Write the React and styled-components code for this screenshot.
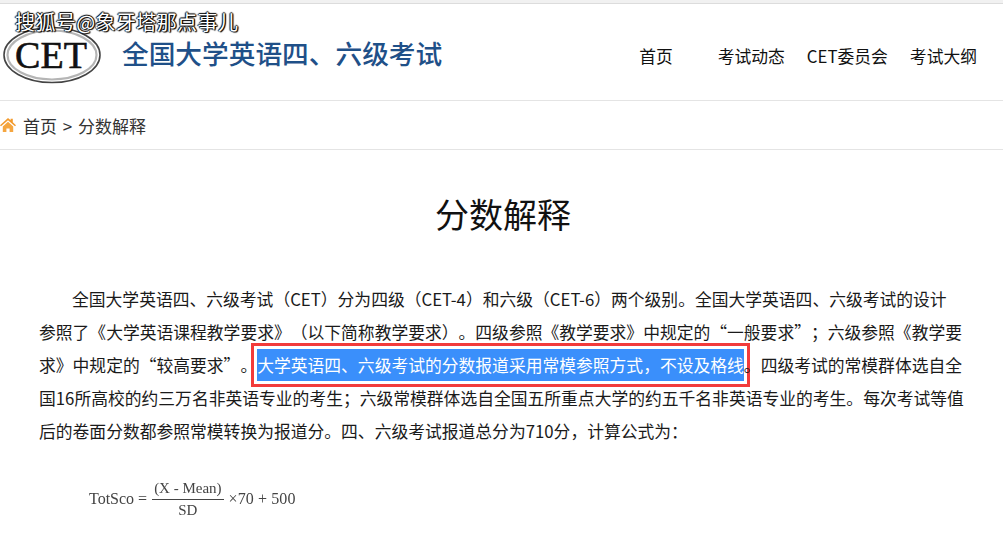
import React from "react";
import styled, { createGlobalStyle } from "styled-components";

const GlobalStyle = createGlobalStyle`
  html, body {
    margin: 0;
    padding: 0;
    background: #fff;
    overflow: hidden;
    font-family: "Noto Sans CJK SC", "Liberation Sans", sans-serif;
    color: #222;
    text-spacing-trim: space-all;
  }
`;

const Page = styled.div`
  width: 1003px;
  height: 545px;
  overflow: hidden;
  position: relative;
`;

const TopStrip = styled.div`
  height: 3px;
  background: #f1f1f1;
  border-bottom: 1px solid #dcdcdc;
`;

const Header = styled.header`
  height: 96px;
  display: flex;
  align-items: center;
  justify-content: space-between;
  border-bottom: 1px solid #e4e4e4;
  padding: 0 26px 0 1px;
`;

const Brand = styled.div`
  display: flex;
  align-items: center;
  gap: 19px;
  margin-top: 2px;
`;

const BrandTitle = styled.div`
  font-size: 26.7px;
  line-height: 36px;
  font-weight: 500;
  color: #1f5088;
  white-space: nowrap;
`;

const Nav = styled.nav`
  display: flex;
  align-items: center;
  gap: 22px;
  margin-top: 8px;
`;

const NavItem = styled.a`
  font-size: 16.8px;
  line-height: 24px;
  color: #111;
  white-space: nowrap;
  margin-right: ${(p) => p.$extra || 0}px;
`;

const Watermark = styled.div`
  position: absolute;
  left: 15px;
  top: 8px;
  font-size: 20px;
  letter-spacing: 0.4px;
  line-height: 28px;
  color: #fff;
  white-space: nowrap;
  text-shadow: 1px 1px 1px #000, -1px 0 1px #000, 0 -1px 1px #000, 1px 0 1px #000;
`;

const Crumbs = styled.div`
  height: 48px;
  display: flex;
  align-items: center;
  gap: 7px;
  border-bottom: 1px solid #e4e4e4;
  font-size: 17px;
  color: #333;
`;

const CrumbText = styled.span`
  white-space: nowrap;
  word-spacing: 2px;
`;

const Heading = styled.h1`
  margin: 39px 0 0;
  padding-left: 3px;
  text-align: center;
  font-size: 34px;
  line-height: 50px;
  font-weight: 400;
  color: #111;
`;

const Article = styled.p`
  margin: 44px 0 0;
  padding: 0 37px 0 39px;
  font-size: 16.8px;
  line-height: 33px;
  text-indent: 33px;
  color: #1a1a1a;
`;

const Picked = styled.span`
  display: inline-block;
  line-height: 32px;
  text-indent: 0;
  background: #3a8ffb;
  color: #fff;
  outline: 3px solid #f23b3b;
  outline-offset: 3px;
`;

const Formula = styled.div`
  display: flex;
  align-items: center;
  gap: 5px;
  margin: 30px 0 0 89px;
  font-family: "Liberation Serif", serif;
  font-size: 16px;
  color: #444;
  filter: blur(0.4px);
  white-space: nowrap;
`;

const Fraction = styled.div`
  display: flex;
  flex-direction: column;
  align-items: center;
  font-size: 15px;
  line-height: 20px;
`;

const Numerator = styled.div`
  border-bottom: 1px solid #444;
  padding: 0 2px 1px;
`;

const Tail = styled.span`
  letter-spacing: 0.1px;
`;

const HomeIcon = () => (
  <svg width="16" height="16" viewBox="0 0 16 16" aria-hidden="true">
    <path d="M0 8.2 8 1l2.6 2.3V1.8h2.2v3.5L16 8.2l-1 1.1L8 3.2 1 9.3z" fill="#f39a2c" />
    <path d="M2.8 9.4 8 4.8l5.2 4.6V15H9.6v-3.6H6.4V15H2.8z" fill="#f5a640" />
  </svg>
);

const CetLogo = () => (
  <svg width="102" height="64" viewBox="0 0 102 64" aria-hidden="true">
    <ellipse cx="51" cy="34" rx="48" ry="27.5" fill="#fff" stroke="#444" strokeWidth="1.6" />
    <ellipse cx="51" cy="34" rx="44.5" ry="24.5" fill="none" stroke="#b5b5b5" strokeWidth="2.2" />
    <text x="50" y="47" textAnchor="middle" fontFamily="Liberation Serif, serif" fontSize="38" fill="#111" stroke="#111" strokeWidth="0.6">
      CET
    </text>
    <circle cx="98" cy="5" r="4" fill="none" stroke="#999" strokeWidth="1" />
  </svg>
);

export default function App() {
  return (
    <Page>
      <GlobalStyle />
      <TopStrip />
      <Header>
        <Brand>
          <CetLogo />
          <BrandTitle>全国大学英语四、六级考试</BrandTitle>
        </Brand>
        <Nav>
          <NavItem $extra={23}>首页</NavItem>
          <NavItem>考试动态</NavItem>
          <NavItem>CET委员会</NavItem>
          <NavItem>考试大纲</NavItem>
        </Nav>
      </Header>
      <Watermark>搜狐号@象牙塔那点事儿</Watermark>
      <Crumbs>
        <HomeIcon />
        <CrumbText>首页 &gt; 分数解释</CrumbText>
      </Crumbs>
      <Heading>分数解释</Heading>
      <Article>
        全国大学英语四、六级考试（CET）分为四级（CET-4）和六级（CET-6）两个级别。全国大学英语四、六级考试的设计
        <br />
        参照了《大学英语课程教学要求》（以下简称教学要求）。四级参照《教学要求》中规定的“一般要求”；六级参照《教学要求》中规定的“较高要求”。
        <Picked>大学英语四、六级考试的分数报道采用常模参照方式，不设及格线</Picked>
        。四级考试的常模群体选自全国16所高校的约三万名非英语专业的考生；六级常模群体选自全国五所重点大学的约五千名非英语专业的考生。每次考试等值后的卷面分数都参照常模转换为报道分。四、六级考试报道总分为710分，计算公式为：
      </Article>
      <Formula>
        <span>TotSco =</span>
        <Fraction>
          <Numerator>(X - Mean)</Numerator>
          <span>SD</span>
        </Fraction>
        <Tail>×70 + 500</Tail>
      </Formula>
    </Page>
  );
}
